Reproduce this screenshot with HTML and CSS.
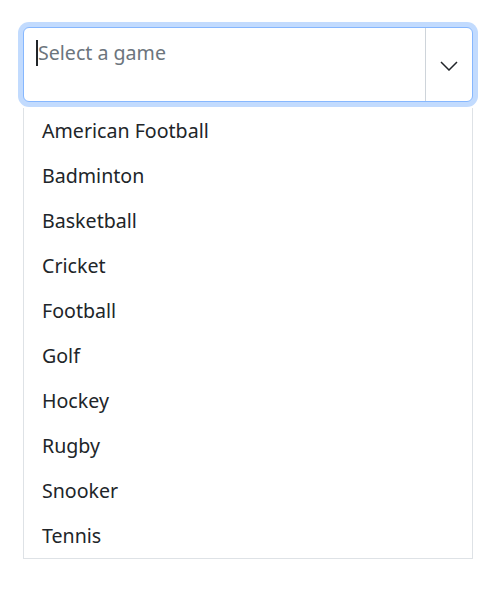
FILE: index.html
```html
<!DOCTYPE html>
<html>
<head>
<meta charset="utf-8">
<link rel="stylesheet" href="styles.css">
</head>
<body>
<div class="combo">
  <div class="field">
    <div class="input"><span class="caret"></span><span class="placeholder">Select a game</span></div>
    <div class="toggle">
      <svg width="18" height="10" viewBox="0 0 18 10"><path d="M1 1 L9 9 L17 1" fill="none" stroke="#212529" stroke-width="1.5"/></svg>
    </div>
  </div>
  <ul class="list">
    <li>American Football</li>
    <li>Badminton</li>
    <li>Basketball</li>
    <li>Cricket</li>
    <li>Football</li>
    <li>Golf</li>
    <li>Hockey</li>
    <li>Rugby</li>
    <li>Snooker</li>
    <li>Tennis</li>
  </ul>
</div>
</body>
</html>
```
FILE: styles.css
```css
html, body {
  margin: 0;
  padding: 0;
  background: #fff;
}
body {
  font-family: "Noto Sans", "Open Sans", sans-serif;
  color: #212529;
  padding: 27px 0 0 23px;
}
.combo {
  width: 450px;
  display: flex;
  flex-direction: column;
  gap: 6px;
}
.field {
  display: flex;
  height: 75px;
  box-sizing: border-box;
  border: 1px solid #86b7fe;
  border-radius: 6px;
  box-shadow: 0 0 0 5px rgba(13, 110, 253, 0.25);
  background: #fff;
}
.input {
  flex: 1;
  display: flex;
  align-items: center;
  height: 30px;
  padding: 10px 0 0 12px;
  font-size: 19.6px;
  line-height: 30px;
}
.caret {
  display: inline-block;
  width: 2px;
  height: 26px;
  background: #212529;
}
.placeholder {
  color: #6c757d;
}
.toggle {
  width: 46px;
  border-left: 1px solid #ced4da;
  display: flex;
  align-items: center;
  justify-content: center;
  padding-top: 2px;
}
.toggle svg {
  display: block;
}
.list {
  list-style: none;
  margin: 0;
  padding: 0;
  border: 1px solid #dee2e6;
  border-top: none;
}
.list li {
  height: 45px;
  box-sizing: border-box;
  padding: 1px 0 0 18px;
  line-height: 44px;
  font-size: 19.6px;
}
```
